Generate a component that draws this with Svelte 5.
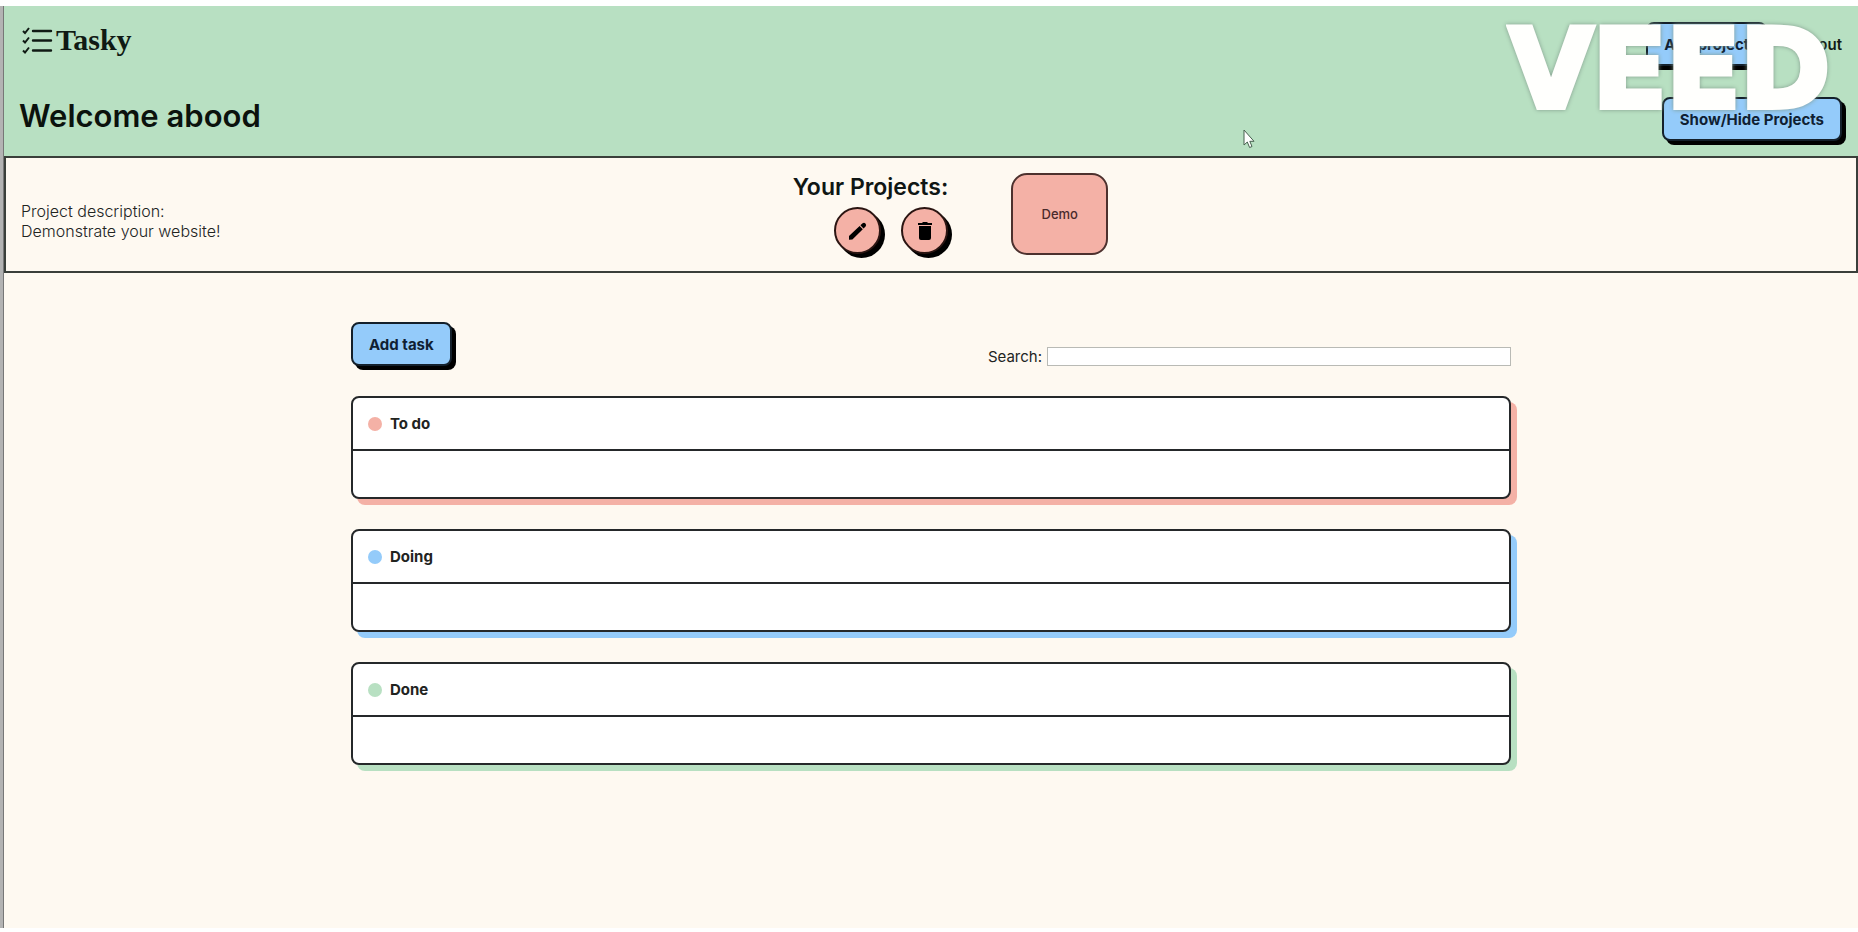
<script>
  let showProjects = $state(true);
  let query = $state('');
  const columns = [
    { name: 'To do', tone: 'coral' },
    { name: 'Doing', tone: 'sky' },
    { name: 'Done', tone: 'mint' }
  ];
</script>

<div class="page">
  <header>
    <div class="bar top">
      <a class="logo" href="#home">
        <svg width="32" height="28" viewBox="0 0 32 28" fill="none" stroke="#101a14" stroke-width="2" aria-hidden="true">
          <path d="M12 5H30M12 14.500H30M12 24.500H30" stroke-width="2.400" stroke-linecap="round" />
          <path d="M2 5l2 2 4-5M2 14.500l2 2 4-5M2 24.500l2 2 4-5" />
        </svg>
        <span>Tasky</span>
      </a>
      <nav>
        <button class="btn">Add project</button>
        <a class="logout" href="#logout">Logout</a>
      </nav>
    </div>
    <div class="bar">
      <h1>Welcome abood</h1>
      <button class="btn" onclick={() => (showProjects = !showProjects)}>Show/Hide Projects</button>
    </div>
    <div class="watermark">VEED</div>
    <svg class="cursor" width="12" height="20" viewBox="0 0 12 20" aria-hidden="true">
      <path d="M1 1V16L4.300 13L6.600 18.500L9 17.500L6.800 12.300H11Z" fill="#fff" stroke="#46604e" stroke-width="1" />
    </svg>
  </header>

  {#if showProjects}
    <section class="projects">
      <p>Project description:<br />Demonstrate your website!</p>
      <div class="chooser">
        <div class="manage">
          <h2>Your Projects:</h2>
          <div class="actions">
            <button class="round" aria-label="Edit project">
              <svg width="20" height="20" viewBox="0 0 20 20" aria-hidden="true">
                <path d="M1 15L11.600 5L14.800 8.200L4.400 18.600L1 18.800Z M12.400 4.300L14.600 2.300Q16 1.200 17.400 2.400Q18.800 3.900 17.600 5.400L15.500 7.500Z" fill="#000" />
              </svg>
            </button>
            <button class="round" aria-label="Delete project">
              <svg width="20" height="20" viewBox="0 0 20 20" aria-hidden="true">
                <path d="M4 5H16V17Q16 19 14 19H6Q4 19 4 17Z M3 2H7L8 1H12L13 2H17V4H3Z" fill="#000" />
              </svg>
            </button>
          </div>
        </div>
        <button class="project">Demo</button>
      </div>
    </section>
  {/if}

  <main>
    <div class="tools">
      <button class="btn">Add task</button>
      <label for="search">Search:</label>
      <input id="search" type="text" bind:value={query} />
    </div>
    {#each columns as column}
      <section class="card {column.tone}">
        <h3><span class="dot"></span>{column.name}</h3>
        <div class="tasks"></div>
      </section>
    {/each}
  </main>
</div>

<style>
  :global(body) {
    margin: 0;
    background: #fff;
  }
  .page,
  .page * {
    box-sizing: border-box;
  }
  .page {
    --ink: #25282a;
    --coral: #f4b1a6;
    --sky: #94cbfa;
    --mint: #b8e0c2;
    position: relative;
    display: flow-root;
    min-height: calc(100vh - 4px);
    padding-left: 4px;
    border-top: 6px solid #fff;
    background: linear-gradient(to right, #b3b3b3 3px, #777 3px 4px, #fef9f1 4px);
    font-family: Inter, sans-serif;
    font-size: 16px;
    color: #22241f;
  }
  h1,
  h2,
  h3,
  p {
    margin: 0;
  }
  button {
    font-family: inherit;
    cursor: pointer;
  }
  header {
    position: relative;
    display: flex;
    flex-direction: column;
    gap: 32px;
    padding: 16px 16px 16px 15px;
    background: var(--mint);
  }
  .bar {
    display: flex;
    align-items: flex-start;
    justify-content: space-between;
    height: 43px;
  }
  .top {
    padding-left: 2px;
  }
  .logo {
    display: flex;
    align-items: center;
    gap: 3px;
    height: 36px;
    color: #101a14;
    font-family: "Liberation Serif", serif;
    font-size: 30px;
    font-weight: 700;
    text-decoration: none;
  }
  nav {
    display: flex;
    align-items: center;
    gap: 24px;
  }
  .logout {
    color: #101a14;
    font-size: 15px;
    font-weight: 600;
    text-decoration: none;
  }
  h1 {
    color: #0b120d;
    font-size: 31px;
    font-weight: 600;
    line-height: 38px;
  }
  .btn {
    height: 44px;
    padding: 0 16px;
    border: 2px solid #14202b;
    border-radius: 8px;
    background: var(--sky);
    box-shadow: 4px 4px 0 #000;
    color: #101f33;
    font-size: 15px;
    font-weight: 700;
  }
  .watermark {
    position: absolute;
    top: 4px;
    right: 28px;
    color: #fffffd;
    font-family: "DejaVu Sans", sans-serif;
    font-size: 108px;
    font-weight: 700;
    line-height: 120px;
    pointer-events: none;
    -webkit-text-stroke: 6px #fffffd;
    filter: drop-shadow(0 0 2px #819a8b);
  }
  .cursor {
    position: absolute;
    top: 123px;
    left: calc(67% - 3px);
  }
  .projects {
    display: grid;
    grid-template-columns: 1fr auto 1fr;
    min-height: 117px;
    padding: 15px 14px 14px;
    border: 2px solid #3a3f3a;
  }
  .projects p {
    align-self: center;
    margin-top: 12px;
    padding-left: 1px;
    font-size: 16px;
    font-weight: 300;
    line-height: 20px;
  }
  .chooser {
    display: flex;
    gap: 63px;
    margin-left: 39px;
  }
  .manage {
    display: flex;
    flex-direction: column;
    align-items: flex-end;
    gap: 5px;
  }
  h2 {
    color: #101614;
    font-size: 23px;
    font-weight: 600;
    line-height: 29px;
  }
  .actions {
    display: flex;
    gap: 20px;
  }
  .round {
    display: grid;
    place-items: center;
    width: 47px;
    height: 47px;
    padding: 0;
    border: 2px solid #2b1512;
    border-radius: 50%;
    background: var(--coral);
    box-shadow: 4px 4px 0 #000;
  }
  .project {
    width: 97px;
    height: 82px;
    border: 2px solid #4d312e;
    border-radius: 16px;
    background: var(--coral);
    color: #4a2a2c;
    font-size: 13px;
    font-weight: 500;
  }
  main {
    display: flex;
    flex-direction: column;
    gap: 30px;
    width: calc(100% - 32px);
    max-width: 1160px;
    margin: 49px auto 32px;
  }
  .tools {
    display: flex;
    align-items: flex-end;
    gap: 5px;
  }
  .tools label {
    margin-left: auto;
    font-size: 15px;
    line-height: 19px;
  }
  .tools input {
    width: 40%;
    height: 19px;
    padding: 0 4px;
    border: 1px solid #b9bab5;
    background: #fff;
    font: inherit;
    font-size: 13px;
  }
  .card {
    border: 2px solid var(--ink);
    border-radius: 8px;
    background: #fff;
    box-shadow: 6px 6px 0 var(--tone);
  }
  .coral {
    --tone: var(--coral);
  }
  .sky {
    --tone: var(--sky);
  }
  .mint {
    --tone: var(--mint);
  }
  h3 {
    display: flex;
    align-items: center;
    gap: 8px;
    height: 53px;
    padding: 0 15px;
    border-bottom: 2px solid var(--ink);
    font-size: 15px;
    font-weight: 700;
  }
  .dot {
    width: 14px;
    height: 14px;
    border-radius: 50%;
    background: var(--tone);
  }
  .tasks {
    min-height: 46px;
  }
</style>
